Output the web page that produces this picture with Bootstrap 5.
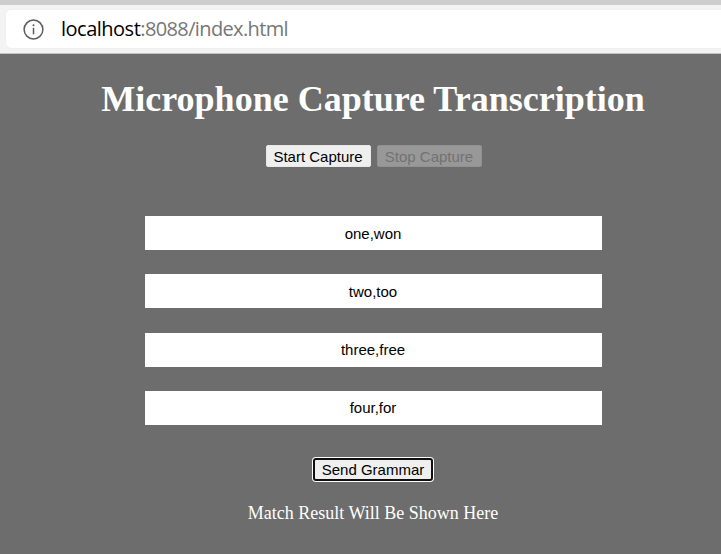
<!DOCTYPE html>
<html lang="en">
<head>
<meta charset="utf-8">
<meta name="viewport" content="width=device-width, initial-scale=1">
<title>Microphone Capture Transcription</title>
<link href="https://cdn.jsdelivr.net/npm/bootstrap@5.3.0/dist/css/bootstrap.min.css" rel="stylesheet">
<style>
body { height: 554px; background: #6d6d6d; color: #fff; font-family: "Liberation Serif", serif; }
.browser-bar { height: 54px; background: #f3f3f3; border-top: 5px solid #cdcdcd; border-bottom: 1px solid #c4c4c4; padding: 5px 0 5px 6px; }
.address { height: 38px; background: #fff; border-radius: 5px 0 0 5px; padding-left: 17px; box-shadow: 0 0 2px #e6e6e6; }
.url { font: 20px/26px "Open Sans", sans-serif; color: #767676; margin-left: 17px; letter-spacing: -.63px; }
.url span { color: #000; letter-spacing: -.5px; }
.page { padding-left: 25px; height: 500px; }
.title { font-size: 36px; line-height: 42px; font-weight: 700; margin: 24px 0 0; white-space: nowrap; }
.actions { margin-top: 25px; gap: 6px; padding-left: 1px; }
.btn-plain { --bs-btn-font-family: "Liberation Sans", Arial, sans-serif; --bs-btn-font-size: 15px; --bs-btn-line-height: 1; --bs-btn-padding-x: 0; --bs-btn-padding-y: 0; --bs-btn-border-width: 1px; --bs-btn-border-radius: 2px; --bs-btn-bg: #efefef; --bs-btn-color: #000; --bs-btn-border-color: #e9e9e9; --bs-btn-disabled-bg: #989898; --bs-btn-disabled-color: #727272; --bs-btn-disabled-border-color: #919191; --bs-btn-disabled-opacity: 1; width: 105px; height: 22px; white-space: nowrap; }
.btn-plain.send { width: 120px; height: 23px; margin-top: 33px; border: 2px solid #101010; border-radius: 3px; box-shadow: 0 0 0 1px #fff; }
.words { width: 457px; margin-top: 49px; gap: 24.3px; }
.words .form-control { height: 34px; padding: 0; border: 0; border-radius: 0; font: 15px/17px "Liberation Sans", Arial, sans-serif; color: #000; background: #fff; }
.result { font-size: 18px; line-height: 21px; margin: 22px 0 0; }
</style>
</head>
<body class="overflow-hidden">
<header class="browser-bar">
  <div class="address d-flex align-items-center">
    <svg width="21" height="21" viewBox="0 0 21 21" fill="none" stroke="#5c5c5c" stroke-width="1.5" aria-hidden="true"><circle cx="10.5" cy="10.5" r="9.4"/><path d="M10.5 8.8v6.5"/><circle cx="10.5" cy="6.2" r="1" fill="#5c5c5c" stroke="none"/></svg>
    <div class="url"><span>localhost</span>:8088/index.html</div>
  </div>
</header>
<main class="page d-flex flex-column align-items-center">
  <h1 class="title">Microphone Capture Transcription</h1>
  <div class="actions d-flex">
    <button class="btn btn-plain" type="button">Start Capture</button>
    <button class="btn btn-plain" type="button" disabled>Stop Capture</button>
  </div>
  <form class="words d-flex flex-column">
    <input class="form-control text-center" type="text" value="one,won" aria-label="Grammar 1">
    <input class="form-control text-center" type="text" value="two,too" aria-label="Grammar 2">
    <input class="form-control text-center" type="text" value="three,free" aria-label="Grammar 3">
    <input class="form-control text-center" type="text" value="four,for" aria-label="Grammar 4">
  </form>
  <button class="btn btn-plain send" type="button">Send Grammar</button>
  <p class="result">Match Result Will Be Shown Here</p>
</main>
<script src="https://cdn.jsdelivr.net/npm/bootstrap@5.3.0/dist/js/bootstrap.bundle.min.js"></script>
</body>
</html>
